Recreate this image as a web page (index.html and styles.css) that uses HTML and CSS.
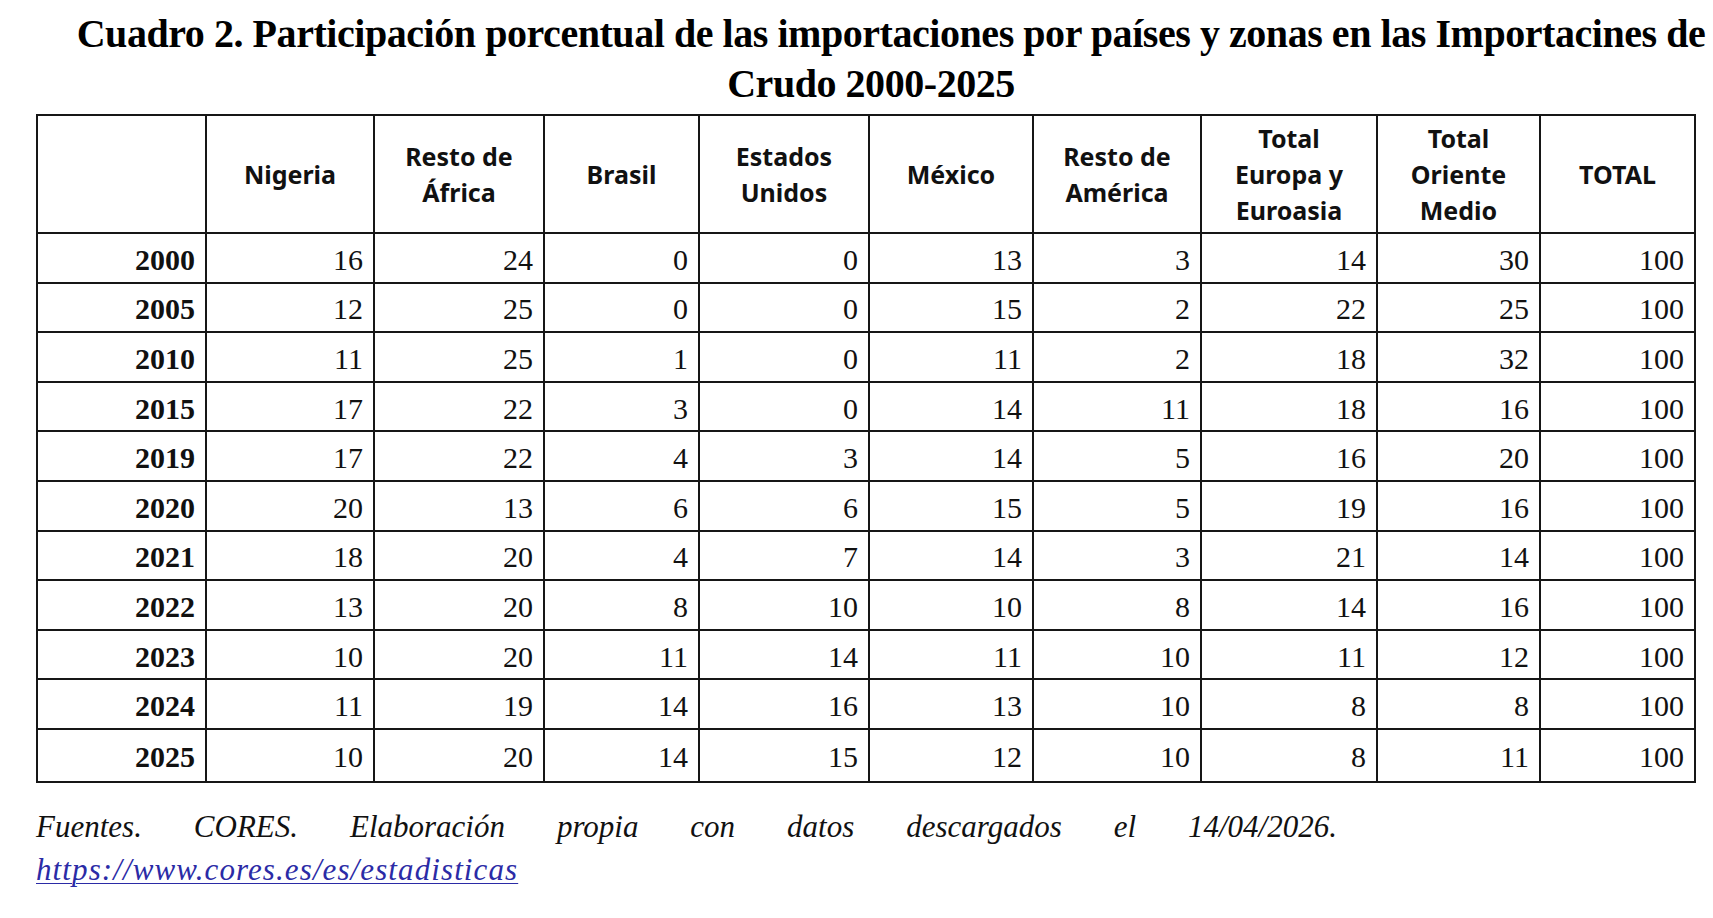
FILE: index.html
```html
<!DOCTYPE html>
<html lang="es">
<head>
<meta charset="utf-8">
<title>Cuadro 2</title>
<link rel="stylesheet" href="styles.css">
</head>
<body>
<div class="page">
  <h1 class="title">Cuadro 2. Participación porcentual de las importaciones por países y zonas en las Importacines de Crudo 2000-2025</h1>
  <table class="data">
    <colgroup>
      <col class="c-year"><col class="c1"><col class="c2"><col class="c3"><col class="c4"><col class="c5"><col class="c6"><col class="c7"><col class="c8"><col class="c9">
    </colgroup>
    <thead>
      <tr>
        <th></th>
        <th>Nigeria</th>
        <th>Resto de<br>África</th>
        <th>Brasil</th>
        <th>Estados<br>Unidos</th>
        <th>México</th>
        <th>Resto de<br>América</th>
        <th>Total<br>Europa y<br>Euroasia</th>
        <th>Total<br>Oriente<br>Medio</th>
        <th>TOTAL</th>
      </tr>
    </thead>
    <tbody>
      <tr><td class="year">2000</td><td>16</td><td>24</td><td>0</td><td>0</td><td>13</td><td>3</td><td>14</td><td>30</td><td>100</td></tr>
      <tr><td class="year">2005</td><td>12</td><td>25</td><td>0</td><td>0</td><td>15</td><td>2</td><td>22</td><td>25</td><td>100</td></tr>
      <tr><td class="year">2010</td><td>11</td><td>25</td><td>1</td><td>0</td><td>11</td><td>2</td><td>18</td><td>32</td><td>100</td></tr>
      <tr><td class="year">2015</td><td>17</td><td>22</td><td>3</td><td>0</td><td>14</td><td>11</td><td>18</td><td>16</td><td>100</td></tr>
      <tr><td class="year">2019</td><td>17</td><td>22</td><td>4</td><td>3</td><td>14</td><td>5</td><td>16</td><td>20</td><td>100</td></tr>
      <tr><td class="year">2020</td><td>20</td><td>13</td><td>6</td><td>6</td><td>15</td><td>5</td><td>19</td><td>16</td><td>100</td></tr>
      <tr><td class="year">2021</td><td>18</td><td>20</td><td>4</td><td>7</td><td>14</td><td>3</td><td>21</td><td>14</td><td>100</td></tr>
      <tr><td class="year">2022</td><td>13</td><td>20</td><td>8</td><td>10</td><td>10</td><td>8</td><td>14</td><td>16</td><td>100</td></tr>
      <tr><td class="year">2023</td><td>10</td><td>20</td><td>11</td><td>14</td><td>11</td><td>10</td><td>11</td><td>12</td><td>100</td></tr>
      <tr><td class="year">2024</td><td>11</td><td>19</td><td>14</td><td>16</td><td>13</td><td>10</td><td>8</td><td>8</td><td>100</td></tr>
      <tr class="last"><td class="year">2025</td><td>10</td><td>20</td><td>14</td><td>15</td><td>12</td><td>10</td><td>8</td><td>11</td><td>100</td></tr>
    </tbody>
  </table>
  <p class="source">Fuentes. CORES. Elaboración propia con datos descargados el 14/04/2026. <a class="link" href="#">https://www.cores.es/es/estadisticas</a></p>
</div>
</body>
</html>
```
FILE: styles.css
```css
html, body {
  margin: 0;
  padding: 0;
  background: #ffffff;
}

.page {
  padding: 9px 0 0 36px;
  color: #000;
}

.title {
  width: 1670px;
  margin: 0;
  font-family: "Liberation Serif", "Times New Roman", serif;
  font-weight: bold;
  font-size: 40px;
  line-height: 50px;
  letter-spacing: -0.45px;
  text-indent: 40px;
  text-align: center;
  color: #000;
}

.data {
  margin-top: 5px;
  width: 1658px;
  table-layout: fixed;
  border-collapse: collapse;
  border: 2px solid #161616;
}

.c-year { width: 169px; }
.c1 { width: 168px; }
.c2 { width: 170px; }
.c3 { width: 155px; }
.c4 { width: 170px; }
.c5 { width: 164px; }
.c6 { width: 168px; }
.c7 { width: 176px; }
.c8 { width: 163px; }
.c9 { width: 155px; }

.data th,
.data td {
  border: 2px solid #161616;
  padding: 0;
}

.data thead tr {
  height: 118px;
}

.data th {
  font-family: "Noto Sans", "Open Sans", sans-serif;
  font-weight: bold;
  font-size: 25px;
  line-height: 36px;
  text-align: center;
  vertical-align: middle;
  color: #111;
}

.data tbody tr {
  height: 49.6px;
}

.data tbody tr.last {
  height: 53px;
}

.data td {
  font-family: "Liberation Serif", "Times New Roman", serif;
  font-size: 30px;
  line-height: 32px;
  text-align: right;
  vertical-align: middle;
  padding: 4px 10px 0 0;
  color: #111;
}

.data td.year {
  font-weight: bold;
}

.source {
  width: 1301px;
  margin: 22px 0 0 0;
  font-family: "Liberation Serif", "Times New Roman", serif;
  font-style: italic;
  font-size: 31px;
  line-height: 43px;
  text-align: justify;
  color: #111;
}

.link {
  color: #2b2ba6;
  letter-spacing: 1.1px;
  text-decoration: underline;
  text-decoration-thickness: 1px;
  text-underline-offset: 3px;
}
```
